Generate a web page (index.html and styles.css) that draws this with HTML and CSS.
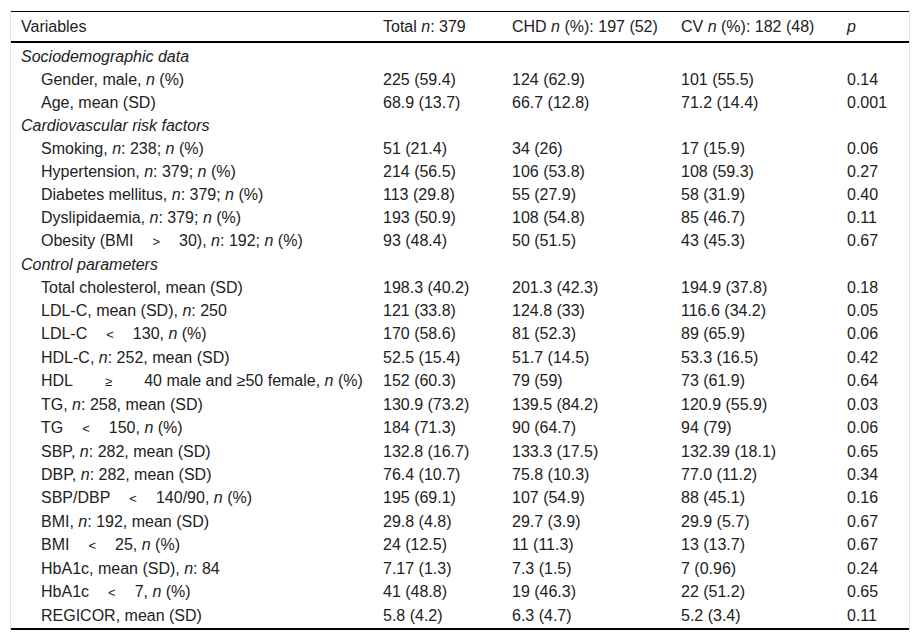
FILE: index.html
```html
<!DOCTYPE html>
<html>
<head>
<meta charset="utf-8">
<link rel="stylesheet" href="styles.css">
</head>
<body>
<div class="wrap">
<table class="tbl">
<colgroup>
<col class="c1"><col class="c2"><col class="c3"><col class="c4"><col class="c5">
</colgroup>
<thead>
<tr><th>Variables</th><th>Total <i>n</i>: 379</th><th>CHD <i>n</i> (%): 197 (52)</th><th>CV <i>n</i> (%): 182 (48)</th><th><i>p</i></th></tr>
</thead>
<tbody>
<tr class="grp first"><td colspan="5"><i>Sociodemographic data</i></td></tr>
<tr><td class="ind">Gender, male, <i>n</i> (%)</td><td>225 (59.4)</td><td>124 (62.9)</td><td>101 (55.5)</td><td>0.14</td></tr>
<tr><td class="ind">Age, mean (SD)</td><td>68.9 (13.7)</td><td>66.7 (12.8)</td><td>71.2 (14.4)</td><td>0.001</td></tr>
<tr class="grp"><td colspan="5"><i>Cardiovascular risk factors</i></td></tr>
<tr><td class="ind">Smoking, <i>n</i>: 238; <i>n</i> (%)</td><td>51 (21.4)</td><td>34 (26)</td><td>17 (15.9)</td><td>0.06</td></tr>
<tr><td class="ind">Hypertension, <i>n</i>: 379; <i>n</i> (%)</td><td>214 (56.5)</td><td>106 (53.8)</td><td>108 (59.3)</td><td>0.27</td></tr>
<tr><td class="ind">Diabetes mellitus, <i>n</i>: 379; <i>n</i> (%)</td><td>113 (29.8)</td><td>55 (27.9)</td><td>58 (31.9)</td><td>0.40</td></tr>
<tr><td class="ind">Dyslipidaemia, <i>n</i>: 379; <i>n</i> (%)</td><td>193 (50.9)</td><td>108 (54.8)</td><td>85 (46.7)</td><td>0.11</td></tr>
<tr><td class="ind">Obesity (BMI<span class="op">&gt;</span>30), <i>n</i>: 192; <i>n</i> (%)</td><td>93 (48.4)</td><td>50 (51.5)</td><td>43 (45.3)</td><td>0.67</td></tr>
<tr class="grp"><td colspan="5"><i>Control parameters</i></td></tr>
<tr><td class="ind">Total cholesterol, mean (SD)</td><td>198.3 (40.2)</td><td>201.3 (42.3)</td><td>194.9 (37.8)</td><td>0.18</td></tr>
<tr><td class="ind">LDL-C, mean (SD), <i>n</i>: 250</td><td>121 (33.8)</td><td>124.8 (33)</td><td>116.6 (34.2)</td><td>0.05</td></tr>
<tr><td class="ind">LDL-C<span class="op">&lt;</span>130, <i>n</i> (%)</td><td>170 (58.6)</td><td>81 (52.3)</td><td>89 (65.9)</td><td>0.06</td></tr>
<tr><td class="ind">HDL-C, <i>n</i>: 252, mean (SD)</td><td>52.5 (15.4)</td><td>51.7 (14.5)</td><td>53.3 (16.5)</td><td>0.42</td></tr>
<tr><td class="ind">HDL<span class="op wide">≥</span>40 male and ≥50 female, <i>n</i> (%)</td><td>152 (60.3)</td><td>79 (59)</td><td>73 (61.9)</td><td>0.64</td></tr>
<tr><td class="ind">TG, <i>n</i>: 258, mean (SD)</td><td>130.9 (73.2)</td><td>139.5 (84.2)</td><td>120.9 (55.9)</td><td>0.03</td></tr>
<tr><td class="ind">TG<span class="op">&lt;</span>150, <i>n</i> (%)</td><td>184 (71.3)</td><td>90 (64.7)</td><td>94 (79)</td><td>0.06</td></tr>
<tr><td class="ind">SBP, <i>n</i>: 282, mean (SD)</td><td>132.8 (16.7)</td><td>133.3 (17.5)</td><td>132.39 (18.1)</td><td>0.65</td></tr>
<tr><td class="ind">DBP, <i>n</i>: 282, mean (SD)</td><td>76.4 (10.7)</td><td>75.8 (10.3)</td><td>77.0 (11.2)</td><td>0.34</td></tr>
<tr><td class="ind">SBP/DBP<span class="op">&lt;</span>140/90, <i>n</i> (%)</td><td>195 (69.1)</td><td>107 (54.9)</td><td>88 (45.1)</td><td>0.16</td></tr>
<tr><td class="ind">BMI, <i>n</i>: 192, mean (SD)</td><td>29.8 (4.8)</td><td>29.7 (3.9)</td><td>29.9 (5.7)</td><td>0.67</td></tr>
<tr><td class="ind">BMI<span class="op">&lt;</span>25, <i>n</i> (%)</td><td>24 (12.5)</td><td>11 (11.3)</td><td>13 (13.7)</td><td>0.67</td></tr>
<tr><td class="ind">HbA1c, mean (SD), <i>n</i>: 84</td><td>7.17 (1.3)</td><td>7.3 (1.5)</td><td>7 (0.96)</td><td>0.24</td></tr>
<tr><td class="ind">HbA1c<span class="op">&lt;</span>7, <i>n</i> (%)</td><td>41 (48.8)</td><td>19 (46.3)</td><td>22 (51.2)</td><td>0.65</td></tr>
<tr class="last"><td class="ind">REGICOR, mean (SD)</td><td>5.8 (4.2)</td><td>6.3 (4.7)</td><td>5.2 (3.4)</td><td>0.11</td></tr>
</tbody>
</table>
</div>
</body>
</html>
```

FILE: styles.css
```css
html, body {
  margin: 0;
  padding: 0;
  background: #fff;
}
body {
  font-family: "Liberation Sans", Arial, sans-serif;
  font-size: 16px;
  color: #222;
}
.wrap {
  margin: 10px 10px 0 10px;
  padding-top: 1px;
  border-left: 1px solid #e4e4e4;
  border-right: 1px solid #e4e4e4;
  width: 898px;
}
.tbl {
  width: 898px;
  table-layout: fixed;
  border-collapse: collapse;
  border-top: 1px solid #000;
  border-bottom: 2px solid #000;
}
.c1 { width: 362px; }
.c2 { width: 129px; }
.c3 { width: 169px; }
.c4 { width: 166px; }
.c5 { width: 72px; }
th {
  text-align: left;
  font-weight: normal;
  padding: 6px 10px 5px 10px;
  line-height: 18px;
  border-bottom: 2px solid #000;
  white-space: nowrap;
}
td {
  padding: 2px 10px;
  line-height: 19px;
  white-space: nowrap;
  vertical-align: top;
}
td.ind {
  padding-left: 30px;
}
.first td {
  padding-top: 4px;
}
.last td {
  padding-bottom: 3px;
}
.op {
  display: inline-block;
  padding: 0 19px;
  font-size: 13px;
}
.op.wide {
  padding: 0 32px;
}
```
